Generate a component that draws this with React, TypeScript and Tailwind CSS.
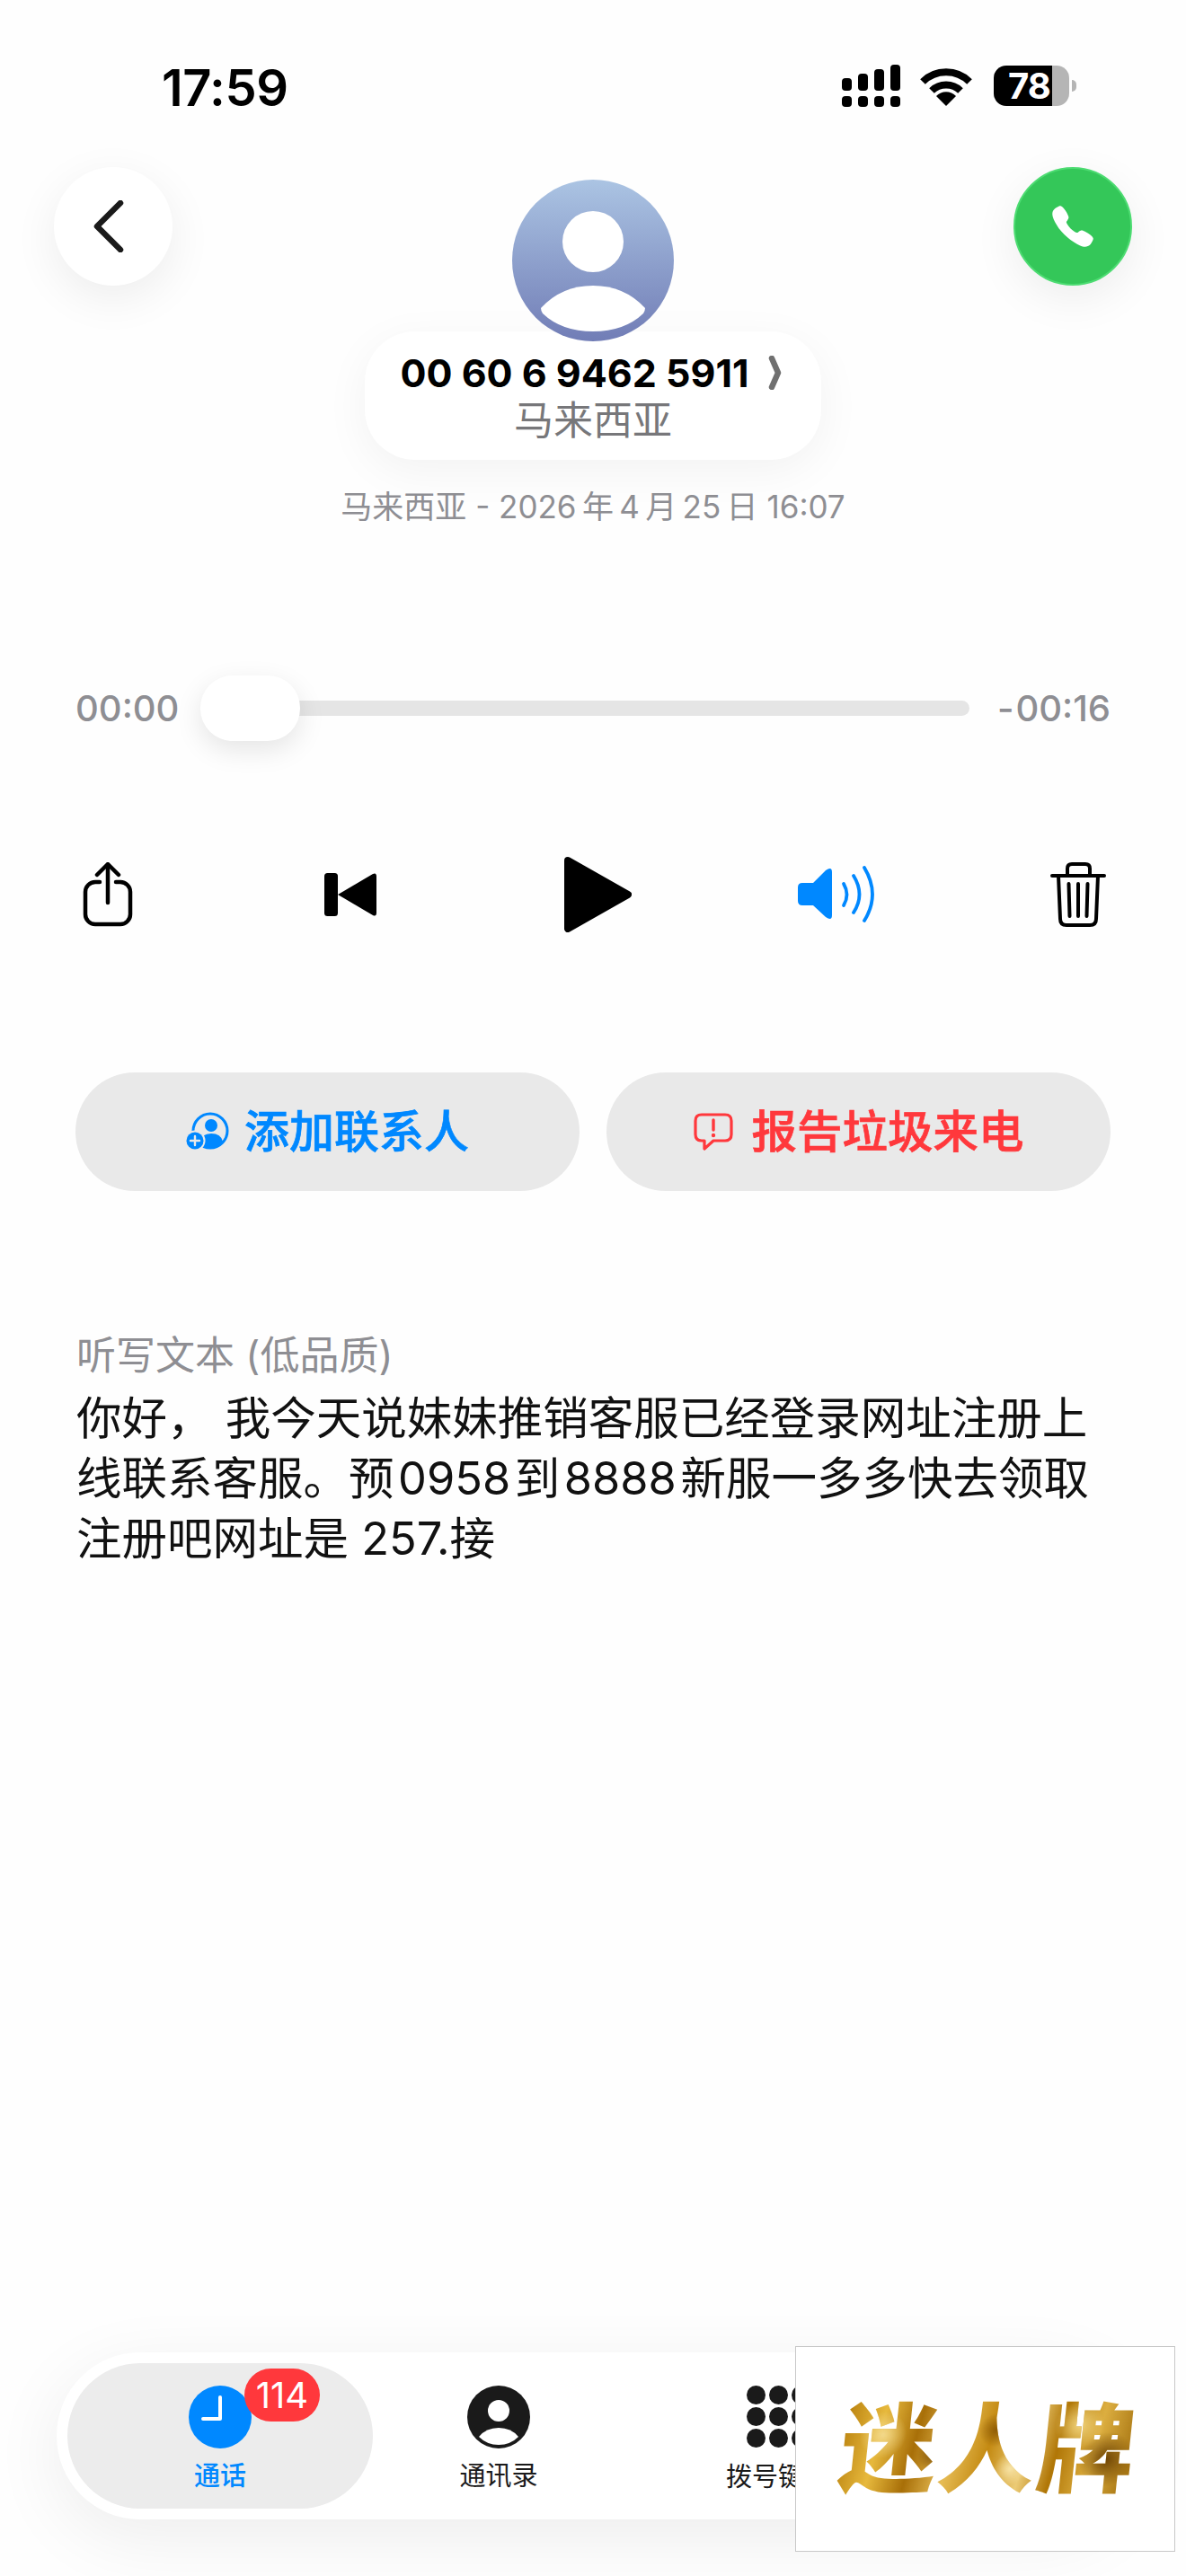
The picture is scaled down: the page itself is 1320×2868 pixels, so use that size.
import { IoCall } from 'react-icons/io5'

const font = "font-['Inter','Noto_Sans_CJK_SC',sans-serif]"

function SignalIcon() {
  return (
    <svg width="65" height="47" viewBox="0 0 65 47" fill="#000">
      <rect x="0" y="15" width="11" height="14" rx="4" />
      <rect x="18" y="10" width="11" height="19" rx="4" />
      <rect x="36" y="5" width="11" height="24" rx="4" />
      <rect x="54" y="0" width="11" height="29" rx="4" />
      <rect x="0" y="35" width="11" height="12" rx="4" />
      <rect x="18" y="35" width="11" height="12" rx="4" />
      <rect x="36" y="35" width="11" height="12" rx="4" />
      <rect x="54" y="35" width="11" height="12" rx="4" />
    </svg>
  )
}

function WifiIcon() {
  return (
    <svg width="58" height="42" viewBox="0 0 58 42" fill="none" stroke="#000" strokeWidth="8">
      <path d="M3 15 A37 37 0 0 1 55 15" />
      <path d="M13 25 A23 23 0 0 1 45 25" />
      <path d="M18 31 A15 15 0 0 1 40 31 L29 42 Z" fill="#000" stroke="none" />
    </svg>
  )
}

function ShareIcon() {
  return (
    <svg width="56" height="72" viewBox="0 0 56 72" fill="none" stroke="#000" strokeWidth="4.5" strokeLinecap="round" strokeLinejoin="round">
      <path d="M19 22 H14 A11 11 0 0 0 3 33 V58 A11 11 0 0 0 14 69 H42 A11 11 0 0 0 53 58 V33 A11 11 0 0 0 42 22 H37" />
      <path d="M28 45 V3" />
      <path d="M16 14 L28 2 L40 14" />
    </svg>
  )
}

function PrevIcon() {
  return (
    <svg width="58" height="48" viewBox="0 0 58 48" fill="#000">
      <rect x="0" y="0" width="15" height="48" rx="3.5" />
      <path d="M15 24 L54 1 Q58 -1 58 4 V44 Q58 49 54 47 Z" />
    </svg>
  )
}

function PlayIcon() {
  return (
    <svg width="75" height="84" viewBox="0 0 75 84" fill="#000" stroke="#000" strokeWidth="8" strokeLinejoin="round">
      <path d="M4 4 L71 42 L4 80 Z" />
    </svg>
  )
}

function SpeakerIcon() {
  return (
    <svg width="86" height="64" viewBox="0 0 86 64" fill="none" stroke="#0088ff" strokeWidth="3.8" strokeLinecap="round">
      <path d="M5 19 H17 L31 5 Q38 0 38 7 V55 Q38 62 31 57 L17 44 H5 Q0 44 0 39 V24 Q0 19 5 19 Z" fill="#0088ff" stroke="none" />
      <path d="M51 20 Q58 32 51 44" />
      <path d="M62 11 Q75 32 62 52" />
      <path d="M74 2 Q92 32 74 61" />
    </svg>
  )
}

function TrashIcon() {
  return (
    <svg width="62" height="72" viewBox="0 0 62 72" fill="none" stroke="#000" strokeWidth="4" strokeLinecap="round" strokeLinejoin="round">
      <path d="M2 15 H60" />
      <path d="M19 14 V7 Q19 2 24 2 H39 Q44 2 44 7 V14" />
      <path d="M9 15 L11 63 Q11 70 18 70 H44 Q51 70 51 63 L53 15" />
      <path d="M20.5 24 L21.5 60 M31 24 V60 M41.5 24 L40.5 60" />
    </svg>
  )
}

function AddContactIcon() {
  return (
    <svg width="48" height="44" viewBox="0 0 48 44">
      <circle cx="27" cy="21" r="19" fill="none" stroke="#0088ff" strokeWidth="3" />
      <circle cx="28" cy="15" r="7" fill="#0088ff" />
      <path d="M14 35 Q17 24 28 24 Q39 24 41 33 Q35 40 27 40 Q20 40 14 35 Z" fill="#0088ff" />
      <circle cx="10" cy="32" r="11.5" fill="#e9e9e9" />
      <circle cx="10" cy="32" r="9.5" fill="#0088ff" />
      <path d="M10 27 V37 M5 32 H15" stroke="#e9e9e9" strokeWidth="2.4" strokeLinecap="round" />
    </svg>
  )
}

function ReportIcon() {
  return (
    <svg width="44" height="42" viewBox="0 0 44 42" fill="none" stroke="#ff383c" strokeWidth="3.2" strokeLinejoin="round">
      <path d="M9 2 H35 Q42 2 42 9 V24 Q42 31 35 31 H22 L12 40 V31 H9 Q2 31 2 24 V9 Q2 2 9 2 Z" />
      <path d="M22 8 V19" strokeLinecap="round" strokeWidth="3.4" />
      <circle cx="22" cy="25" r="2.2" fill="#ff383c" stroke="none" />
    </svg>
  )
}

function ClockIcon() {
  return (
    <svg width="70" height="70" viewBox="0 0 70 70">
      <circle cx="35" cy="35" r="35" fill="#0088ff" />
      <path d="M35 13 V37 H16" fill="none" stroke="#fff" strokeWidth="4" strokeLinecap="round" strokeLinejoin="round" />
    </svg>
  )
}

function ContactIcon() {
  return (
    <svg width="70" height="70" viewBox="0 0 70 70">
      <circle cx="35" cy="35" r="35" fill="#1a1a1a" />
      <circle cx="35" cy="28" r="12" fill="#fff" />
      <path d="M13 57 Q21 47 35 47 Q49 47 57 57 Q48 66 35 66 Q22 66 13 57 Z" fill="#fff" />
    </svg>
  )
}

function Avatar() {
  return (
    <svg width="180" height="180" viewBox="0 0 180 180" className="relative z-10">
      <defs>
        <linearGradient id="avatarFill" x1="0" y1="0" x2="0" y2="1">
          <stop offset="0" stopColor="#abc4e3" />
          <stop offset="1" stopColor="#717db6" />
        </linearGradient>
      </defs>
      <circle cx="90" cy="90" r="90" fill="url(#avatarFill)" />
      <circle cx="90" cy="69" r="34" fill="#fff" />
      <path d="M32 143 Q55 118 90 118 Q125 118 148 143 Q148 146 146 149 Q125 169 90 169 Q55 169 34 149 Q32 146 32 143 Z" fill="#fff" />
    </svg>
  )
}

function App() {
  return (
    <div className={`relative w-[1320px] h-[2868px] overflow-hidden bg-[#fefefe] flex flex-col ${font}`}>
      {/* Status bar */}
      <div className="flex items-start justify-between pl-[180px] pr-[122px] pt-[72px] h-[119px]">
        <span className="text-[56px] leading-[52px] font-semibold text-black tracking-[-0.5px]">17:59</span>
        <div className="flex items-center">
          <SignalIcon />
          <div className="ml-[22px] mt-[2px]"><WifiIcon /></div>
          <div className="ml-[24px] w-[84px] h-[45px] rounded-[14px] bg-[linear-gradient(90deg,#000_77%,#b5b5b5_77%)] flex items-center pl-[16px] text-[40px] font-bold leading-none text-white tracking-[-1px]">78</div>
          <div className="ml-[3px] w-[5px] h-[13px] rounded-r-full bg-[#b5b5b5]" />
        </div>
      </div>

      {/* Header */}
      <div className="grid grid-cols-[132px_1fr_132px] items-start px-[60px] mt-[67px]">
        <button className="w-[132px] h-[132px] rounded-full bg-white shadow-[0_14px_50px_rgba(0,0,0,0.07)] flex items-center justify-center">
          <svg width="34" height="58" viewBox="0 0 34 58" fill="none" stroke="#1a1a1a" strokeWidth="6.5" strokeLinecap="round" strokeLinejoin="round" className="mr-[10px]">
            <path d="M30 3 L4 29 L30 55" />
          </svg>
        </button>
        <div className="flex flex-col items-center pt-[14px]">
          <Avatar />
          <div className="-mt-[11px] w-[508px] h-[143px] rounded-[56px] bg-white shadow-[0_12px_50px_rgba(0,0,0,0.05)] flex flex-col items-center pt-[20px]">
            <div className="flex items-center text-[43px] leading-[52px] font-bold text-black -ml-[4px]">
              00 60 6 9462 5911
              <svg width="16" height="38" viewBox="0 0 16 38" fill="none" stroke="#707070" strokeWidth="6.5" strokeLinecap="round" strokeLinejoin="round" className="ml-[21px]">
                <path d="M4 3 L11 19 L4 35" />
              </svg>
            </div>
            <div className="text-[44px] leading-[54px] text-[#77777a]">马来西亚</div>
          </div>
          <div className="mt-[30px] text-[35px] leading-[44px] text-[#8e8e93]">马来西亚 - 2026&#8201;年&#8201;4&#8201;月&#8201;25&#8201;日 16:07</div>
        </div>
        <button className="w-[132px] h-[132px] rounded-full bg-[#34c759] border-2 border-[#4ddc72] shadow-[0_14px_50px_rgba(0,0,0,0.07)] flex items-center justify-center">
          <IoCall className="w-[52px] h-[52px] text-white" />
        </button>
      </div>

      {/* Slider */}
      <div className="flex items-center px-[84px] mt-[166px] h-[73px]">
        <span className="w-[139px] text-[40px] font-medium text-[#8e8e93] leading-none">00:00</span>
        <div className="relative z-10 w-[111px] h-[73px] rounded-[36px] bg-white shadow-[0_10px_30px_rgba(0,0,0,0.1)]" />
        <div className="-ml-[10px] w-[755px] h-[17px] rounded-r-full bg-[#e5e5e5]" />
        <span className="ml-auto text-[40px] font-medium text-[#8e8e93] leading-none"><span className="mr-[2px]">-</span>00:16</span>
      </div>

      {/* Playback controls */}
      <div className="relative flex items-center h-[84px] mt-[129px] pl-[92px]">
        <ShareIcon />
        <div className="ml-[213px]"><PrevIcon /></div>
        <div className="ml-[209px]"><PlayIcon /></div>
        <div className="ml-[185px]"><SpeakerIcon /></div>
        <div className="ml-[195px]"><TrashIcon /></div>
      </div>

      {/* Actions */}
      <div className="grid grid-cols-2 gap-[30px] px-[84px] mt-[156px]">
        <button className="h-[132px] rounded-[66px] bg-[#e9e9e9] flex items-center justify-center gap-[17px] text-[50px] font-medium [-webkit-text-stroke:0.7px_currentColor] text-[#0088ff]">
          <AddContactIcon />
          添加联系人
        </button>
        <button className="h-[132px] rounded-[66px] bg-[#e9e9e9] flex items-center justify-center gap-[21px] text-[50.5px] font-medium [-webkit-text-stroke:0.7px_currentColor] text-[#ff383c]">
          <ReportIcon />
          报告垃圾来电
        </button>
      </div>

      {/* Transcript */}
      <div className="px-[85px] mt-[155px]">
        <div className="text-[44px] leading-[56px] text-[#8e8e93]">听写文本 (低品质)</div>
        <p className="mt-[8px] text-[50.5px] leading-[67px] text-[#111] w-[1160px]">
          你好， 我今天说妹妹推销客服已经登录网址注册上线联系客服。预&#8202;0958&#8202;到&#8202;8888&#8202;新服一多多快去领取注册吧网址是 257.接
        </p>
      </div>

      {/* Tab bar */}
      <div className="mt-auto mb-[63px] ml-[63px] w-[1194px] h-[186px] rounded-[93px] bg-white p-[12px] flex shadow-[0_20px_80px_rgba(0,0,0,0.07)]">
        <div className="relative w-[340px] h-[162px] rounded-[81px] bg-[#ececec] flex flex-col items-center pt-[25px]">
          <ClockIcon />
          <span className="mt-[11px] text-[29px] leading-[40px] font-medium text-[#0088ff]">通话</span>
          <span className="absolute left-[197px] top-[6px] w-[84px] h-[59px] rounded-full bg-[#ff383c] text-white text-[40px] leading-[59px] text-center">114</span>
        </div>
        <div className="w-[280px] flex flex-col items-center pt-[25px]">
          <ContactIcon />
          <span className="mt-[11px] text-[29px] leading-[40px] text-[#1a1a1a]">通讯录</span>
        </div>
        <div className="w-[342px] flex flex-col items-center pt-[25px]">
          <div className="grid grid-cols-3 gap-x-[4px] gap-y-[3px]">
            {Array.from({ length: 9 }).map((_, i) => (
              <span key={i} className="w-[21px] h-[21px] rounded-full bg-[#1a1a1a]" />
            ))}
          </div>
          <span className="mt-[13px] text-[29px] leading-[40px] text-[#1a1a1a]">拨号键盘</span>
        </div>
      </div>

      {/* Watermark overlay */}
      <div className="absolute left-[885px] top-[2612px] w-[423px] h-[229px] bg-white border border-[#c8c8c8] flex items-center justify-center pl-[8px]">
        <span className="-skew-x-6 text-[108px] leading-none font-black tracking-[2px] text-transparent bg-clip-text bg-[radial-gradient(circle_at_14%_35%,#f2d88a_0,transparent_9%),radial-gradient(circle_at_32%_55%,#7a4c05_0,transparent_8%),radial-gradient(circle_at_52%_30%,#8f5c06_0,transparent_10%),radial-gradient(circle_at_58%_70%,#f7e3a6_0,transparent_9%),radial-gradient(circle_at_80%_25%,#f0d27a_0,transparent_10%),radial-gradient(circle_at_90%_60%,#6f4504_0,transparent_10%),linear-gradient(100deg,#b57c0a_0%,#e7b93d_14%,#a86f08_26%,#e6bc55_38%,#c48a12_50%,#eccb76_62%,#b07606_72%,#dcae40_84%,#9a6707_100%)]">
          迷人牌
        </span>
      </div>
    </div>
  )
}

export default App
